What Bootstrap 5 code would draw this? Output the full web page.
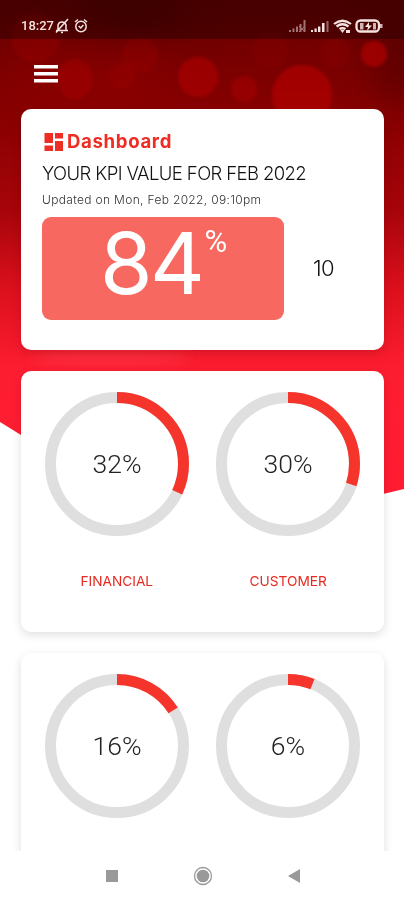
<!DOCTYPE html>
<html lang="en">
<head>
<meta charset="utf-8">
<meta name="viewport" content="width=device-width, initial-scale=1">
<title>Dashboard</title>
<link href="https://cdn.jsdelivr.net/npm/bootstrap@5.3.0/dist/css/bootstrap.min.css" rel="stylesheet">
<style>
  body { font-family: Inter, "Open Sans", sans-serif; color: #111; background: #fff; }
  .screen { width: 404px; height: 900px; }
  .backdrop { inset: 0 0 auto 0; height: 500px; z-index: 0; }
  .statusbar { height: 39px; padding: 12px 21px 0 21px; background: rgba(20, 0, 0, .38); color: #f4e4e1; }
  .clock { font: 500 13px/26px Roboto, sans-serif; width: 33px; white-space: nowrap; }
  .appbar { height: 70px; padding: 0 34px; }
  .scroller { height: 742px; padding: 0 20px; gap: 21px; }
  .panel { border: 0; border-radius: 10px; box-shadow: 0 3px 10px rgba(0, 0, 0, .13); margin-left: 1px; }
  .panel-kpi { height: 241px; padding: 21px 21px 0; }
  .panel-pair { height: 261px; padding: 21px 10px 0; }
  .app-title { font-size: 18.6px; line-height: 22px; color: #ee2d24; letter-spacing: .65px; }
  .kpi-title { font-size: 18.5px; line-height: 24px; font-weight: 300; letter-spacing: -.6px; margin-top: 9px; white-space: nowrap; }
  .kpi-date { font-size: 12px; line-height: 18px; color: #333; font-weight: 300; letter-spacing: .33px; margin-top: 6px; white-space: nowrap; }
  .kpi-box { width: 242px; height: 103px; border-radius: 9px; background: #f76860; color: #fff; padding-left: 58px; }
  .kpi-value { font-size: 85px; line-height: 93px; font-weight: 400; letter-spacing: -2.5px; }
  .kpi-unit { font-family: Roboto, sans-serif; font-size: 31px; line-height: 49px; margin-left: 2px; }
  .kpi-rank { font-size: 22px; font-weight: 300; letter-spacing: -.5px; }
  .ring { width: 144px; height: 144px; }
  .ring-text { font-family: Roboto, sans-serif; font-size: 26.5px; font-weight: 300; fill: #222; }
  .gauge-label { font-size: 13.7px; line-height: 20px; color: #e62b22; margin-top: 35px; }
  .navkeys { height: 49px; gap: 75px; padding-left: 1px; }
</style>
</head>
<body>
<div class="screen position-relative overflow-hidden">
  <svg class="backdrop position-absolute" width="404" height="500" viewBox="0 0 404 500" aria-hidden="true">
    <defs>
      <linearGradient id="base" x1="0" y1="0" x2="0" y2="1">
        <stop offset="0" stop-color="#670000"/><stop offset=".2" stop-color="#840000"/>
        <stop offset=".42" stop-color="#a6040a"/><stop offset=".58" stop-color="#dc101d"/>
        <stop offset=".74" stop-color="#fd1d30"/><stop offset="1" stop-color="#ff1c33"/>
      </linearGradient>
      <filter id="soft"><feGaussianBlur stdDeviation="1.6"/></filter>
      <filter id="glow" x="-20%" y="-150%" width="140%" height="400%"><feGaussianBlur stdDeviation="6"/></filter>
      <filter id="wide" x="-50%" y="-50%" width="200%" height="200%"><feGaussianBlur stdDeviation="18"/></filter>
      <clipPath id="cut"><path d="M0 0H404V489L383 494L200 530L21 435L0 422Z"/></clipPath>
    </defs>
    <g clip-path="url(#cut)">
      <rect width="404" height="500" fill="url(#base)"/>
      <g filter="url(#wide)">
        <ellipse cx="90" cy="85" rx="90" ry="28" fill="#900000" opacity=".6"/>
        <ellipse cx="400" cy="60" rx="30" ry="45" fill="#4c0000" opacity=".55"/>
        <ellipse cx="130" cy="10" rx="60" ry="25" fill="#480000" opacity=".6"/>
      </g>
      <g fill="#b00000" filter="url(#soft)">
        <circle cx="198" cy="77" r="20" opacity=".6"/><circle cx="302" cy="95" r="30" opacity=".7"/>
        <circle cx="374" cy="54" r="13" opacity=".7"/><circle cx="244" cy="89" r="13" opacity=".45"/>
        <ellipse cx="75" cy="79" rx="17" ry="20" opacity=".4"/><circle cx="35" cy="38" r="24" opacity=".25"/>
        <circle cx="140" cy="55" r="18" opacity=".2"/><circle cx="122" cy="76" r="13" opacity=".2"/>
        <circle cx="335" cy="52" r="15" opacity=".15"/><circle cx="270" cy="50" r="18" opacity=".12"/>
      </g>
      <ellipse cx="110" cy="358" rx="80" ry="6" fill="#ff5060" opacity=".4" filter="url(#glow)"/>
    </g>
  </svg>

  <div class="position-relative d-flex flex-column h-100">
    <div class="statusbar d-flex justify-content-between">
      <div class="d-flex align-items-center">
        <span class="clock">18:27</span>
        <svg width="37" height="16" viewBox="0 0 37 16" fill="none" stroke="currentColor" stroke-width="1.5">
          <path d="M4 12V7a4.200 4.200 0 0 1 8 0v5M2 12.500h12M7 14.500h2M14 1 2 14.500"/>
          <circle cx="27" cy="8.500" r="5.200"/><path d="m21 4 3-2.500M33 4l-3-2.500M24.700 8l2 2 2.700-3"/>
        </svg>
      </div>
      <div class="d-flex align-items-center">
        <svg width="95" height="16" viewBox="0 0 95 16" fill="currentColor">
          <g opacity=".5"><path d="M1 12h2v2H1zM4.500 10.500h2V14h-2zM8 8.500h2V14H8zM11.500 6h2v8h-2zM15.500 2h2v12h-2z"/><path d="m11 8 6 6m0-6-6 6" stroke="currentColor"/></g>
          <path d="M23 12h2v2h-2zM26.500 10.500h2.200V14h-2.200zM30 8.500h2.400V14H30zM34 5h2.500v9H34z"/><path d="M38.500 3h2v11h-2z" opacity=".45"/>
          <g fill="none" stroke="currentColor" stroke-width="2.200"><path d="M46 6q8.500-6.500 17 0M48.500 8.500q6-4.500 12 0M51.500 11q3-2 6 0"/></g>
          <path d="m52 11.500 2.500 3.500 2.500-3.500zM58 12h4v3h-4z"/>
          <rect x="68.500" y="2.500" width="22.500" height="11" rx="4" fill="none" stroke="currentColor" stroke-width="2.300"/><path d="M92 6h2.500v4H92zM72 5h3.500v6.500H72zM85 5h3v6.500h-3z" opacity=".8"/>
          <path d="m81 4-4 5h3l-1 4 5-5.500h-3z"/>
        </svg>
      </div>
    </div>

    <div class="appbar d-flex align-items-center">
      <svg width="24" height="18" viewBox="0 0 24 18" fill="#fff" role="img" aria-label="Menu"><path d="M0 0h24v3.500H0zM0 7h24v3.500H0zM0 14h24v3.500H0z"/></svg>
    </div>

    <main class="scroller d-flex flex-column overflow-hidden">
      <section class="card panel panel-kpi flex-shrink-0">
        <div class="d-flex align-items-center">
          <svg class="me-1" width="21" height="19" viewBox="0 0 21 19" fill="#ee2d24"><path d="M2.500 1h8.500v10H2.500zM2.500 13.500h8.500V19H2.500zM13 1h8v5.500h-8zM13 9h8v10h-8z"/></svg>
          <h1 class="app-title fw-bold m-0">Dashboard</h1>
        </div>
        <div class="kpi-title">YOUR KPI VALUE FOR FEB 2022</div>
        <div class="kpi-date">Updated on Mon, Feb 2022, 09:10pm</div>
        <div class="d-flex mt-2">
          <div class="kpi-box d-flex align-items-start flex-shrink-0"><span class="kpi-value">84</span><span class="kpi-unit">%</span></div>
          <div class="kpi-rank flex-grow-1 d-flex align-items-center justify-content-center">10</div>
        </div>
      </section>

      <section class="card panel panel-pair flex-shrink-0">
        <div class="row g-0 text-center">
          <div class="col-6">
            <svg class="ring" viewBox="0 0 144 144"><circle cx="72" cy="72" r="66.500" fill="none" stroke="#dfdfdf" stroke-width="11"/><circle cx="72" cy="72" r="66.500" fill="none" stroke="#f5352c" stroke-width="11" pathLength="100" stroke-dasharray="32 68" transform="rotate(-90 72 72)"/><text class="ring-text" x="72" y="80.500" text-anchor="middle">32%</text></svg>
            <div class="gauge-label">FINANCIAL</div>
          </div>
          <div class="col-6">
            <svg class="ring" viewBox="0 0 144 144"><circle cx="72" cy="72" r="66.500" fill="none" stroke="#dfdfdf" stroke-width="11"/><circle cx="72" cy="72" r="66.500" fill="none" stroke="#f5352c" stroke-width="11" pathLength="100" stroke-dasharray="30 70" transform="rotate(-90 72 72)"/><text class="ring-text" x="72" y="80.500" text-anchor="middle">30%</text></svg>
            <div class="gauge-label">CUSTOMER</div>
          </div>
        </div>
      </section>

      <section class="card panel panel-pair flex-shrink-0">
        <div class="row g-0 text-center">
          <div class="col-6">
            <svg class="ring" viewBox="0 0 144 144"><circle cx="72" cy="72" r="66.500" fill="none" stroke="#dfdfdf" stroke-width="11"/><circle cx="72" cy="72" r="66.500" fill="none" stroke="#f5352c" stroke-width="11" pathLength="100" stroke-dasharray="16 84" transform="rotate(-90 72 72)"/><text class="ring-text" x="72" y="80.500" text-anchor="middle">16%</text></svg>
          </div>
          <div class="col-6">
            <svg class="ring" viewBox="0 0 144 144"><circle cx="72" cy="72" r="66.500" fill="none" stroke="#dfdfdf" stroke-width="11"/><circle cx="72" cy="72" r="66.500" fill="none" stroke="#f5352c" stroke-width="11" pathLength="100" stroke-dasharray="6 94" transform="rotate(-90 72 72)"/><text class="ring-text" x="72" y="80.500" text-anchor="middle">6%</text></svg>
          </div>
        </div>
      </section>
    </main>

    <nav class="navkeys d-flex justify-content-center align-items-center bg-white">
      <svg width="12" height="12"><rect width="12" height="12" fill="#999"/></svg>
      <svg width="20" height="20"><circle cx="10" cy="10" r="8.500" fill="none" stroke="#999" stroke-width="1.300"/><circle cx="10" cy="10" r="6.300" fill="#999"/></svg>
      <svg width="12" height="14"><path d="M12 0v14L0 7z" fill="#999"/></svg>
    </nav>
  </div>
</div>
<script src="https://cdn.jsdelivr.net/npm/bootstrap@5.3.0/dist/js/bootstrap.bundle.min.js"></script>
</body>
</html>
